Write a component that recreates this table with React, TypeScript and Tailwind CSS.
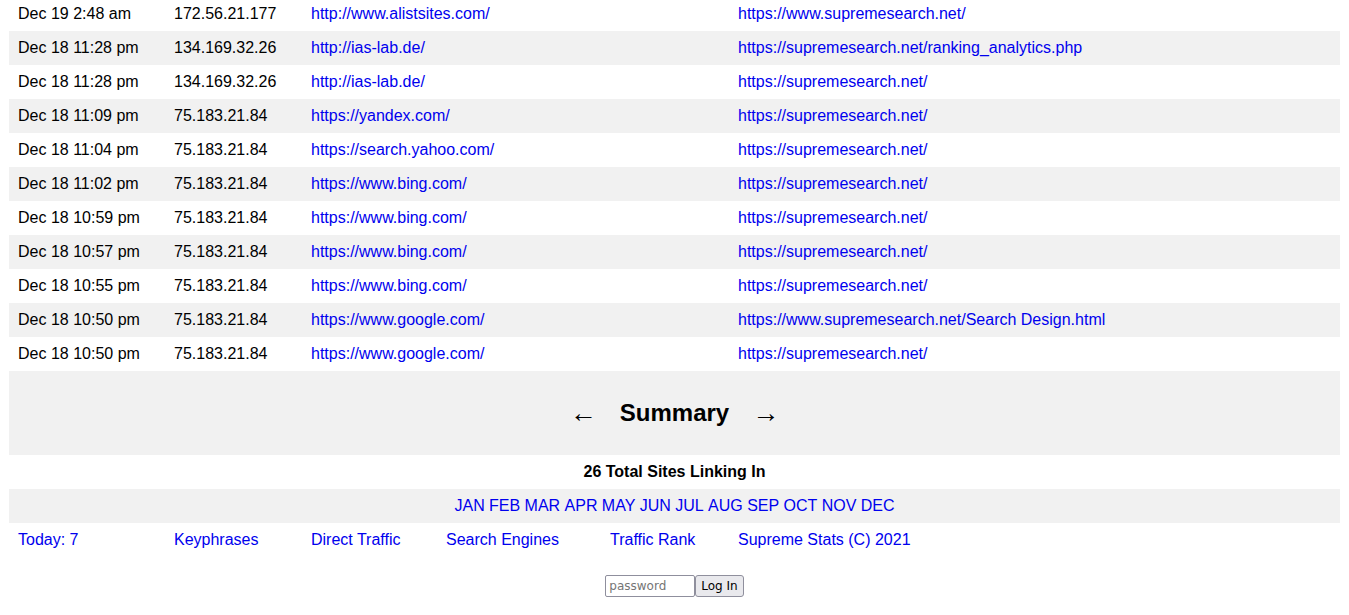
import React from "react";

const visits = [
  { date: "Dec 19 2:48 am", ip: "172.56.21.177", from: "http://www.alistsites.com/", to: "https://www.supremesearch.net/" },
  { date: "Dec 18 11:28 pm", ip: "134.169.32.26", from: "http://ias-lab.de/", to: "https://supremesearch.net/ranking_analytics.php" },
  { date: "Dec 18 11:28 pm", ip: "134.169.32.26", from: "http://ias-lab.de/", to: "https://supremesearch.net/" },
  { date: "Dec 18 11:09 pm", ip: "75.183.21.84", from: "https://yandex.com/", to: "https://supremesearch.net/" },
  { date: "Dec 18 11:04 pm", ip: "75.183.21.84", from: "https://search.yahoo.com/", to: "https://supremesearch.net/" },
  { date: "Dec 18 11:02 pm", ip: "75.183.21.84", from: "https://www.bing.com/", to: "https://supremesearch.net/" },
  { date: "Dec 18 10:59 pm", ip: "75.183.21.84", from: "https://www.bing.com/", to: "https://supremesearch.net/" },
  { date: "Dec 18 10:57 pm", ip: "75.183.21.84", from: "https://www.bing.com/", to: "https://supremesearch.net/" },
  { date: "Dec 18 10:55 pm", ip: "75.183.21.84", from: "https://www.bing.com/", to: "https://supremesearch.net/" },
  { date: "Dec 18 10:50 pm", ip: "75.183.21.84", from: "https://www.google.com/", to: "https://www.supremesearch.net/Search Design.html" },
  { date: "Dec 18 10:50 pm", ip: "75.183.21.84", from: "https://www.google.com/", to: "https://supremesearch.net/" },
];

const months = ["JAN", "FEB", "MAR", "APR", "MAY", "JUN", "JUL", "AUG", "SEP", "OCT", "NOV", "DEC"];

export default function App() {
  return (
    <div className="bg-white px-[9px] text-[16px] text-black" style={{ fontFamily: '"Liberation Sans", Arial, sans-serif' }}>
      <div className="-mt-[3px]">
        {visits.map((v, i) => (
          <div key={i} className={`flex h-[34px] items-center ${i % 2 === 1 ? "bg-[#f1f1f1]" : "bg-white"}`}>
            <div className="w-[156px] pl-[9px]">{v.date}</div>
            <div className="w-[137px] pl-[9px]">{v.ip}</div>
            <div className="w-[427px] pl-[9px]">
              <a href="#" className="text-[#0000ee]">{v.from}</a>
            </div>
            <div className="flex-1 pl-[9px]">
              <a href="#" className="text-[#0000ee]">{v.to}</a>
            </div>
          </div>
        ))}
      </div>

      <div className="flex h-[84px] items-center justify-center gap-[23px] bg-[#f1f1f1]">
        <a href="#" className="text-[27px] font-normal leading-none text-black">←</a>
        <span className="text-[24px] font-bold">Summary</span>
        <a href="#" className="text-[27px] font-normal leading-none text-black">→</a>
      </div>

      <div className="flex h-[34px] items-center justify-center font-bold">26 Total Sites Linking In</div>

      <div className="flex h-[34px] items-center justify-center gap-[4.4px] bg-[#f1f1f1]">
        {months.map((m) => (
          <a key={m} href="#" className="text-[#0000ee]">{m}</a>
        ))}
      </div>

      <div className="flex h-[34px] items-center text-[#0000ee]">
        <div className="w-[156px] pl-[9px]"><a href="#">Today: 7</a></div>
        <div className="w-[137px] pl-[9px]"><a href="#">Keyphrases</a></div>
        <div className="w-[135px] pl-[9px]"><a href="#">Direct Traffic</a></div>
        <div className="w-[164px] pl-[9px]"><a href="#">Search Engines</a></div>
        <div className="w-[128px] pl-[9px]"><a href="#">Traffic Rank</a></div>
        <div className="flex-1 pl-[9px]"><a href="#">Supreme Stats (C) 2021</a></div>
      </div>

      <form className="flex justify-center pt-[18px] pb-[18px]" style={{ fontFamily: '"DejaVu Sans", sans-serif' }} onSubmit={(e) => e.preventDefault()}>
        <input
          type="password"
          placeholder="password"
          className="h-[22px] w-[90px] rounded-[2px] border border-[#8f8f9d] px-[3px] text-[12px] placeholder:text-[#757575]"
        />
        <button className="h-[22px] rounded-[3px] border border-[#8f8f9d] bg-[#e9e9ed] px-[5px] text-[12px] text-black">
          Log In
        </button>
      </form>
    </div>
  );
}
